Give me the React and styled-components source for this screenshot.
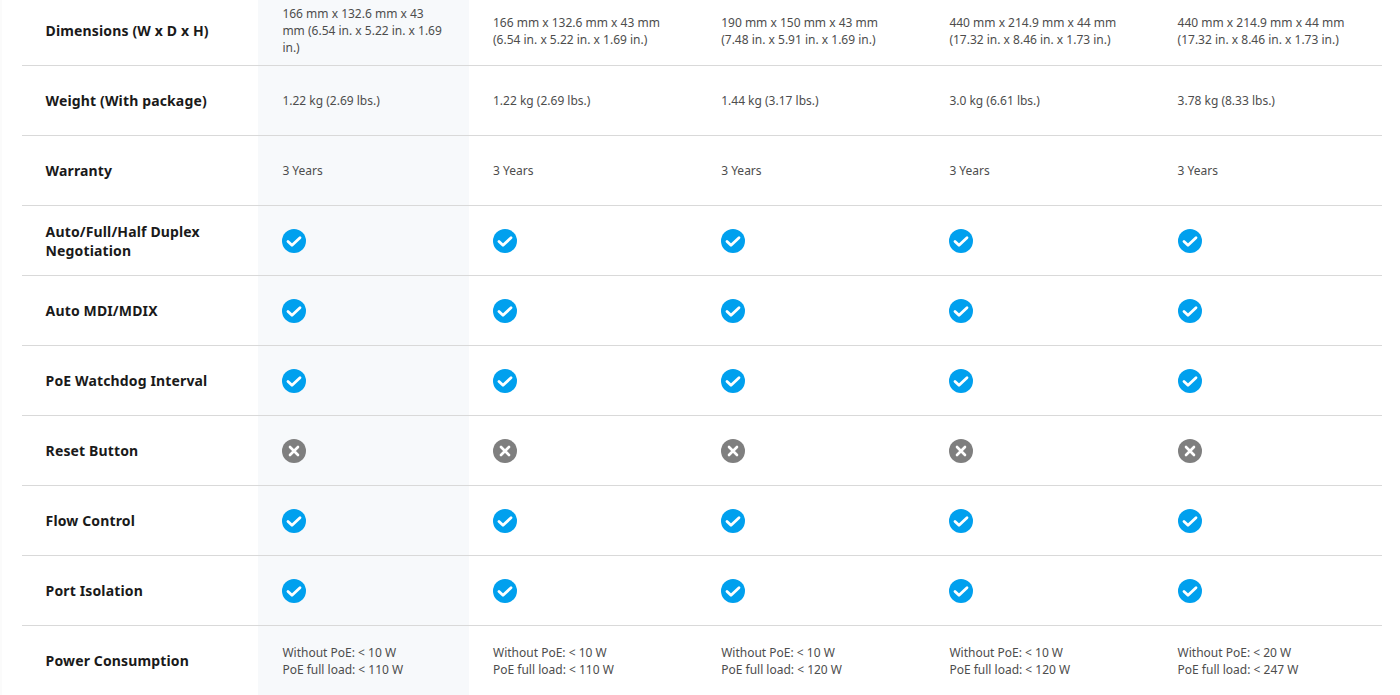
import React from "react";
import styled, { createGlobalStyle } from "styled-components";

const Global = createGlobalStyle`
  html, body { margin: 0; padding: 0; background: #fff; overflow: hidden; }
  body { font-family: "Noto Sans", sans-serif; }
`;

const Page = styled.div`
  width: 1400px;
  height: 695px;
  padding: 0 18px 0 20px;
  border-left: 2px solid #fbfbfb;
  box-sizing: border-box;
  overflow: hidden;
`;

const Table = styled.div`
  margin-top: -4px;
`;

const Row = styled.div`
  display: grid;
  grid-template-columns: 236px 211px 228.2px 228.2px 228.2px 228.4px;
  height: 70px;
  border-bottom: 1px solid ${(p) => (p.$last ? "transparent" : "#d9d9d9")};
  box-sizing: border-box;
`;

const Label = styled.div`
  display: flex;
  align-items: center;
  padding: 0 24px 0 23.6px;
  font-size: 14px;
  font-weight: 700;
  line-height: 19px;
  letter-spacing: 0.14px;
  color: #1a1a1a;
`;

const Cell = styled.div`
  display: flex;
  align-items: center;
  padding: 0 24px 0 ${(p) => (p.$hl ? 24.4 : 24)}px;
  font-size: 12px;
  line-height: 17px;
  color: #4d4d4d;
  background: ${(p) => (p.$hl ? "#f7f9fb" : "transparent")};
`;

const Text = styled.div`
  white-space: pre-line;
`;

const Check = () => (
  <svg width="24" height="24" viewBox="0 0 24 24">
    <circle cx="12" cy="12" r="12" fill="#00a0ee" />
    <path d="M6 12.5l4 3.8 8-7.5" fill="none" stroke="#fff" strokeWidth="2.8" strokeLinecap="round" strokeLinejoin="round" />
  </svg>
);

const Cross = () => (
  <svg width="24" height="24" viewBox="0 0 24 24">
    <circle cx="12" cy="12" r="12" fill="#7f7f7f" />
    <path d="M8 8l8 8M16 8l-8 8" fill="none" stroke="#fff" strokeWidth="2.6" strokeLinecap="round" />
  </svg>
);

const dims = [
  "166 mm x 132.6 mm x 43 mm (6.54 in. x 5.22 in. x 1.69 in.)",
  "166 mm x 132.6 mm x 43 mm\n(6.54 in. x 5.22 in. x 1.69 in.)",
  "190 mm x 150 mm x 43 mm\n(7.48 in. x 5.91 in. x 1.69 in.)",
  "440 mm x 214.9 mm x 44 mm\n(17.32 in. x 8.46 in. x 1.73 in.)",
  "440 mm x 214.9 mm x 44 mm\n(17.32 in. x 8.46 in. x 1.73 in.)",
];

const yes = Array(5).fill("y");

const rows = [
  ["Dimensions (W x D x H)", dims],
  ["Weight (With package)", ["1.22 kg (2.69 lbs.)", "1.22 kg (2.69 lbs.)", "1.44 kg (3.17 lbs.)", "3.0 kg (6.61 lbs.)", "3.78 kg (8.33 lbs.)"]],
  ["Warranty", Array(5).fill("3 Years")],
  ["Auto/Full/Half Duplex Negotiation", yes],
  ["Auto MDI/MDIX", yes],
  ["PoE Watchdog Interval", yes],
  ["Reset Button", Array(5).fill("n")],
  ["Flow Control", yes],
  ["Port Isolation", yes],
  ["Power Consumption", [
    "Without PoE: < 10 W\nPoE full load: < 110 W",
    "Without PoE: < 10 W\nPoE full load: < 110 W",
    "Without PoE: < 10 W\nPoE full load: < 120 W",
    "Without PoE: < 10 W\nPoE full load: < 120 W",
    "Without PoE: < 20 W\nPoE full load: < 247 W",
  ]],
];

export default function App() {
  return (
    <Page>
      <Global />
      <Table>
        {rows.map(([label, cells], i) => (
          <Row key={label} $last={i === rows.length - 1}>
            <Label>{label}</Label>
            {cells.map((c, j) => (
              <Cell key={j} $hl={j === 0}>
                {c === "y" ? <Check /> : c === "n" ? <Cross /> : <Text>{c}</Text>}
              </Cell>
            ))}
          </Row>
        ))}
      </Table>
    </Page>
  );
}
